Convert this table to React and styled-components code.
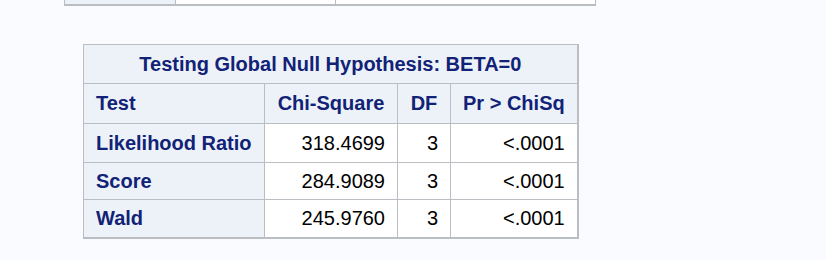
import React from 'react'
import styled, { createGlobalStyle } from 'styled-components'

const GlobalStyle = createGlobalStyle`
    html, body {
        margin: 0;
        padding: 0;
        background: #fafbfe;
    }
    body {
        font-family: "Liberation Sans", Arial, sans-serif;
    }
`

const Page = styled.div`
    display: flex;
    flex-direction: column;
    align-items: flex-start;
    width: 826px;
    height: 260px;
    overflow: hidden;
`

// the bottom edge of the table above, scrolled mostly out of view
const PrevTable = styled.div`
    display: flex;
    margin-left: 64px;
    height: 4px;
    border: 1px solid #babdc1;
    border-top: none;
    border-bottom-width: 2px;
`
const PrevCell = styled.div`
    width: ${p => p.w}px;
    background: ${p => (p.head ? '#edf2f9' : '#ffffff')};
    border-right: 1px solid #babdc1;
    &:last-child {
        border-right: none;
    }
`

const Table = styled.table`
    margin-top: 38px;
    margin-left: 83px;
    border-collapse: collapse;
    table-layout: fixed;
    font-size: 20px;
    border: 1px solid #babdc1;
    border-right-width: 2px;
    border-bottom-width: 2px;
`
const Row = styled.tr`
    height: ${p => p.h}px;
`
const Title = styled.th`
    background: #edf2f9;
    color: #112277;
    font-weight: bold;
    text-align: center;
    border: 1px solid #babdc1;
    padding: 0 12px;
    white-space: nowrap;
`
const Head = styled.th`
    background: #edf2f9;
    color: #112277;
    font-weight: bold;
    text-align: ${p => (p.left ? 'left' : 'center')};
    border: 1px solid #babdc1;
    padding: 0 12px;
    white-space: nowrap;
`
const Data = styled.td`
    background: #ffffff;
    color: #000000;
    text-align: right;
    border: 1px solid #babdc1;
    padding: 0 12px;
    white-space: nowrap;
`

const rows = [
    { test: 'Likelihood Ratio', chi: '318.4699', df: '3', p: '<.0001', h: 39 },
    { test: 'Score', chi: '284.9089', df: '3', p: '<.0001', h: 37 },
    { test: 'Wald', chi: '245.9760', df: '3', p: '<.0001', h: 38 },
]

const App = () => {
    return (
        <Page>
            <GlobalStyle />
            <PrevTable>
                <PrevCell head w={110} />
                <PrevCell w={159} />
                <PrevCell w={259} />
            </PrevTable>
            <Table>
                <colgroup>
                    <col style={{ width: 181 }} />
                    <col style={{ width: 133 }} />
                    <col style={{ width: 53 }} />
                    <col style={{ width: 127 }} />
                </colgroup>
                <thead>
                    <Row h={39}>
                        <Title colSpan={4}>Testing Global Null Hypothesis: BETA=0</Title>
                    </Row>
                    <Row h={40}>
                        <Head left>Test</Head>
                        <Head>Chi-Square</Head>
                        <Head>DF</Head>
                        <Head>Pr &gt; ChiSq</Head>
                    </Row>
                </thead>
                <tbody>
                    {rows.map(r => (
                        <Row key={r.test} h={r.h}>
                            <Head left>{r.test}</Head>
                            <Data>{r.chi}</Data>
                            <Data>{r.df}</Data>
                            <Data>{r.p}</Data>
                        </Row>
                    ))}
                </tbody>
            </Table>
        </Page>
    )
}

export default App
